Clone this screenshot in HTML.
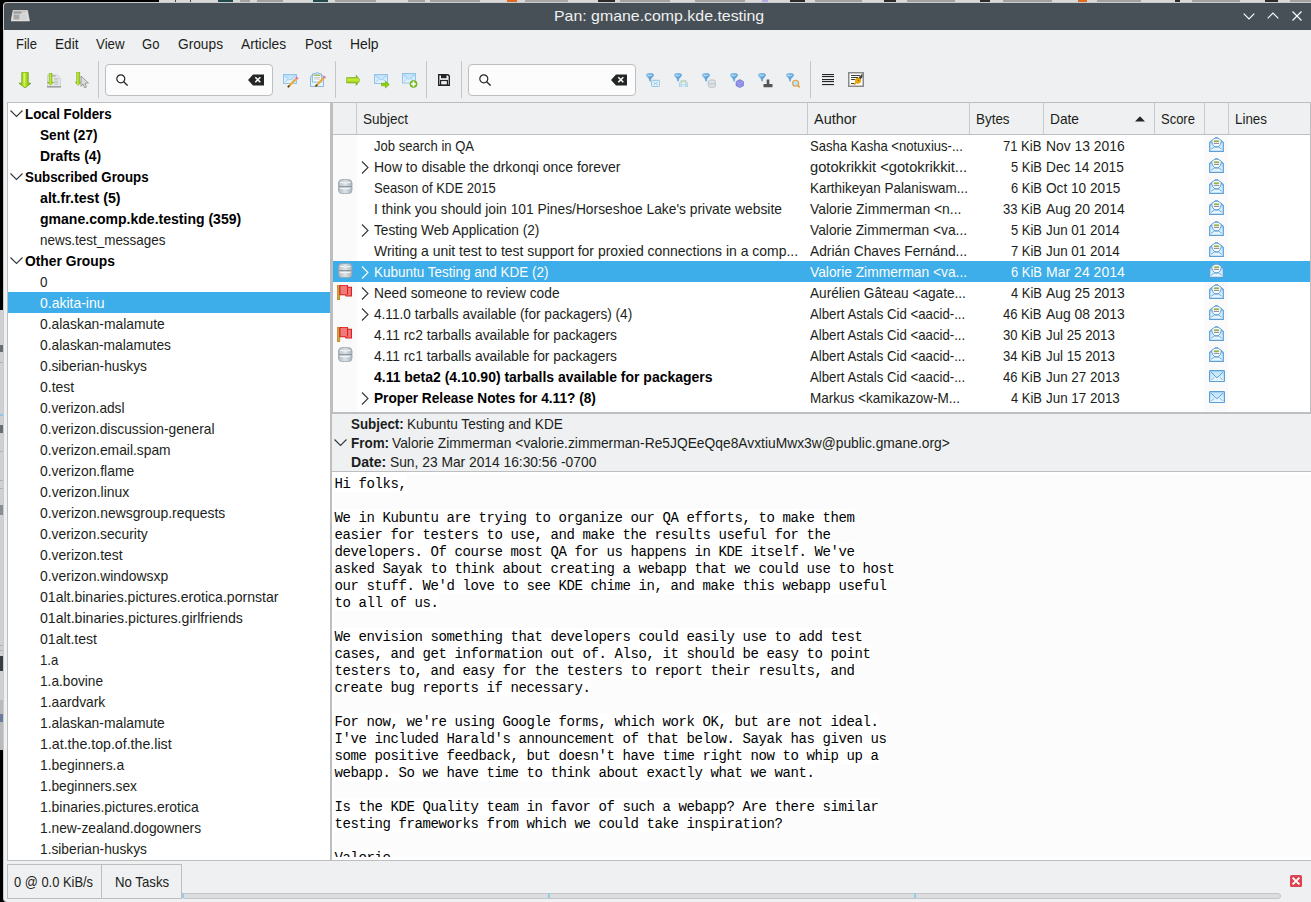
<!DOCTYPE html><html><head><meta charset="utf-8"><style>
*{box-sizing:border-box}
html,body{margin:0;padding:0}
body{width:1311px;height:902px;overflow:hidden;position:relative;background:#000;font-family:"Liberation Sans", sans-serif;font-size:13px;color:#1b1e20}
.a{position:absolute}
.t{position:absolute;white-space:pre;line-height:1;transform-origin:0 0}
.m{position:absolute;white-space:pre;font-family:"Liberation Mono", monospace;font-size:14px;letter-spacing:-0.4px;line-height:17px;color:#000}
</style></head><body>
<div class="a" style="left:159px;top:0;width:1152px;height:2px;background:#d9d9d9"></div>
<div class="a" style="left:175px;top:0;width:1px;height:2px;background:#444"></div>
<div class="a" style="left:190px;top:0;width:1px;height:2px;background:#444"></div>
<div class="a" style="left:218px;top:0;width:15px;height:2px;background:#1f4a48"></div>
<div class="a" style="left:240px;top:0;width:10px;height:2px;background:#a2a2a2"></div>
<div class="a" style="left:257px;top:0;width:26px;height:2px;background:#a2a2a2"></div>
<div class="a" style="left:313px;top:0;width:15px;height:2px;background:#1f4a48"></div>
<div class="a" style="left:335px;top:0;width:41px;height:2px;background:#a2a2a2"></div>
<div class="a" style="left:408px;top:0;width:17px;height:2px;background:#a2a2a2"></div>
<div class="a" style="left:430px;top:0;width:50px;height:2px;background:#a2a2a2"></div>
<div class="a" style="left:507px;top:0;width:10px;height:2px;background:#e06a20"></div>
<div class="a" style="left:525px;top:0;width:43px;height:2px;background:#a8a8a8"></div>
<div class="a" style="left:598px;top:0;width:17px;height:2px;background:#2a2a2a"></div>
<div class="a" style="left:620px;top:0;width:50px;height:2px;background:#a2a2a2"></div>
<div class="a" style="left:695px;top:0;width:50px;height:2px;background:#a2a2a2"></div>
<div class="a" style="left:762px;top:0;width:6px;height:2px;background:#b8a8e0"></div>
<div class="a" style="left:790px;top:0;width:15px;height:2px;background:#2a2a2a"></div>
<div class="a" style="left:815px;top:0;width:47px;height:2px;background:#a2a2a2"></div>
<div class="a" style="left:884px;top:0;width:12px;height:2px;background:#2a2a2a"></div>
<div class="a" style="left:907px;top:0;width:48px;height:2px;background:#a2a2a2"></div>
<div class="a" style="left:980px;top:0;width:10px;height:2px;background:#2a2a2a"></div>
<div class="a" style="left:1003px;top:0;width:49px;height:2px;background:#a2a2a2"></div>
<div class="a" style="left:1078px;top:0;width:9px;height:2px;background:#e06a20"></div>
<div class="a" style="left:1097px;top:0;width:44px;height:2px;background:#a2a2a2"></div>
<div class="a" style="left:1175px;top:0;width:5px;height:2px;background:#2a2a2a"></div>
<div class="a" style="left:1192px;top:0;width:48px;height:2px;background:#a2a2a2"></div>
<div class="a" style="left:1265px;top:0;width:13px;height:2px;background:#2a2a2a"></div>
<div class="a" style="left:1290px;top:0;width:21px;height:2px;background:#a2a2a2"></div>
<div class="a" style="left:3px;top:2px;width:1308px;height:900px;background:#eff0f1;border-top-left-radius:4px;border-bottom-left-radius:4px;border-left:1px solid #c9cbcd;border-top:1px solid #c9cbcd"></div>
<div class="a" style="left:4px;top:3px;width:1307px;height:27px;background:#475057;border-top-left-radius:3px"></div>
<div class="t" style="left:553.50px;top:8.30px;font-size:15px;color:#eff0f1;transform:scaleX(1.0592);">Pan: gmane.comp.kde.testing</div>
<svg class="a" style="left:11px;top:10px;" width="19" height="12" viewBox="0 0 19 12"><path d="M2 0.3 L16.5 0.3 L18.5 11 L0 11Z" fill="#dcdcdc" stroke="#e8e8e8" stroke-width="0.5"/><rect x="2.5" y="4.5" width="6" height="5" fill="#a6a6a6"/><rect x="2.5" y="1.3" width="8" height="2.3" fill="#9a9a9a"/><rect x="11" y="1.5" width="4" height="1" fill="#b8b8b8"/><path d="M9.5 5 L15.5 5 M9.5 7 L15.8 7 M9.5 9 L16 9" stroke="#c4c4c4" stroke-width="0.7"/></svg>
<svg class="a" style="left:1243px;top:13px" width="12" height="7"><path d="M0.7 0.7 L6 6 L11.3 0.7" fill="none" stroke="#fcfcfc" stroke-width="1.2"/></svg>
<svg class="a" style="left:1267px;top:12px" width="12" height="7"><path d="M0.7 6.3 L6 1 L11.3 6.3" fill="none" stroke="#fcfcfc" stroke-width="1.2"/></svg>
<svg class="a" style="left:1292px;top:11px" width="10" height="10"><path d="M0.5 0.5 L9.5 9.5 M9.5 0.5 L0.5 9.5" fill="none" stroke="#fcfcfc" stroke-width="1.2"/></svg>
<div class="a" style="left:0;top:310px;width:3px;height:440px;background:#cfd0d2"></div>
<div class="a" style="left:0;top:656px;width:3px;height:15px;background:#3a3d40"></div>
<div class="a" style="left:0;top:700px;width:3px;height:50px;background:#b9babb"></div>
<div class="a" style="left:0;top:345px;width:3px;height:7px;background:#6a6e72"></div>
<div class="a" style="left:0;top:425px;width:3px;height:8px;background:#6a6e72"></div>
<div class="a" style="left:0;top:505px;width:3px;height:10px;background:#8a8e92"></div>
<div class="a" style="left:0;top:362px;width:3px;height:1px;background:#b0b1b2"></div>
<div class="a" style="left:0;top:451px;width:3px;height:1px;background:#b0b1b2"></div>
<div class="a" style="left:0;top:480px;width:3px;height:1px;background:#b0b1b2"></div>
<div class="a" style="left:0;top:488px;width:3px;height:1px;background:#b0b1b2"></div>
<div class="a" style="left:0;top:414px;width:3px;height:2px;background:#8cc8e8"></div>
<div class="a" style="left:0;top:645px;width:3px;height:1px;background:#b0b1b2"></div>
<div class="a" style="left:0;top:650px;width:3px;height:1px;background:#b0b1b2"></div>
<div class="a" style="left:0;top:714px;width:3px;height:8px;background:#6a7a9a"></div>
<div class="t" style="left:16.00px;top:38.23px;font-size:13.9px;transform:scaleX(0.9350);">File</div>
<div class="t" style="left:55.00px;top:38.23px;font-size:13.9px;transform:scaleX(0.9788);">Edit</div>
<div class="t" style="left:96.00px;top:38.23px;font-size:13.9px;transform:scaleX(0.9591);">View</div>
<div class="t" style="left:142.00px;top:38.23px;font-size:13.9px;transform:scaleX(0.9415);">Go</div>
<div class="t" style="left:178.00px;top:38.23px;font-size:13.9px;transform:scaleX(0.9878);">Groups</div>
<div class="t" style="left:241.00px;top:38.23px;font-size:13.9px;transform:scaleX(0.9921);">Articles</div>
<div class="t" style="left:305.00px;top:38.23px;font-size:13.9px;transform:scaleX(0.9653);">Post</div>
<div class="t" style="left:350.00px;top:38.23px;font-size:13.9px;">Help</div>
<div class="a" style="left:98px;top:61px;width:1px;height:37px;background:#c4c6c8"></div>
<div class="a" style="left:335px;top:61px;width:1px;height:37px;background:#c4c6c8"></div>
<div class="a" style="left:426px;top:61px;width:1px;height:37px;background:#c4c6c8"></div>
<div class="a" style="left:461px;top:61px;width:1px;height:37px;background:#c4c6c8"></div>
<div class="a" style="left:810px;top:61px;width:1px;height:37px;background:#c4c6c8"></div>
<div class="a" style="left:105px;top:64px;width:168px;height:32px;border:1px solid #bcbebf;border-radius:4px;background:#fcfcfc"></div>
<div class="a" style="left:468px;top:64px;width:168px;height:32px;border:1px solid #bcbebf;border-radius:4px;background:#fcfcfc"></div>
<svg class="a" style="left:19px;top:72px;" width="12" height="16" viewBox="0 0 12 16"><defs><linearGradient id="gA" x1="0" x2="1" y1="0" y2="0"><stop offset="0" stop-color="#6aa800"/><stop offset="0.45" stop-color="#c8ee3a"/><stop offset="1" stop-color="#6aa800"/></linearGradient><linearGradient id="gB" x1="0" x2="0" y1="0" y2="1"><stop offset="0" stop-color="#78b800"/><stop offset="0.5" stop-color="#bfe83a"/><stop offset="1" stop-color="#6aa800"/></linearGradient></defs><path d="M2.8 0.8 Q2.8 0 3.6 0 L8.4 0 Q9.2 0 9.2 0.8 L9.2 11.2 L12 11.2 L6 16 L0 11.2 L2.8 11.2Z" fill="url(#gA)" stroke="#5d9a00" stroke-width="0.7"/><path d="M5.2 1 L5.2 11.5" stroke="#e6f870" stroke-width="1.2" opacity="0.8"/></svg>
<svg class="a" style="left:47px;top:73px;" width="14" height="15" viewBox="0 0 14 15"><path d="M0.5 2 L10 2 L13.5 5 L13.5 14 L0.5 14Z" fill="#e8eaea" stroke="#c8cbcc" stroke-width="0.8"/><rect x="0" y="13.2" width="14" height="1.2" fill="#8a8f94"/><rect x="1.8" y="2" width="7" height="1.8" fill="#b9bdc0"/><rect x="7" y="5.5" width="4.5" height="0.8" fill="#9aa0a4"/><path d="M7 8 L11.5 8 M7 9.6 L11.5 9.6 M7 11.2 L11.5 11.2" stroke="#b4b8bb" stroke-width="0.8"/><path d="M2.2 0 L5 0 L5 9.3 L6.6 9.3 L3.6 12.2 L0.4 9.3 L2.2 9.3Z" fill="url(#gA)" stroke="#5d9a00" stroke-width="0.4"/></svg>
<svg class="a" style="left:75px;top:72px;" width="14" height="16" viewBox="0 0 14 16"><path d="M1.6 0 L4.7 0 L4.7 10.2 L5.8 10.2 L3.1 13.5 L0.2 10.2 L1.6 10.2Z" fill="url(#gA)" stroke="#5d9a00" stroke-width="0.4"/><path d="M6 4 L13.5 11 L10 11.2 L11.5 15 L9.5 15.8 L8 12 L6 14.3Z" fill="#dcdcdc" stroke="#8a8a8a" stroke-width="0.8"/></svg>
<svg class="a" style="left:116px;top:74px;" width="12" height="12" viewBox="0 0 12 12"><circle cx="4.8" cy="4.8" r="4" fill="none" stroke="#232627" stroke-width="1.2"/><path d="M7.7 7.7 L11.6 11.6" stroke="#232627" stroke-width="1.3"/></svg>
<svg class="a" style="left:248px;top:74px;" width="16" height="12" viewBox="0 0 16 12"><path d="M0 6 L5 0.5 L16 0.5 L16 11.5 L5 11.5Z" fill="#232627"/><path d="M7.3 3.3 L12.3 8.3 M12.3 3.3 L7.3 8.3" stroke="#fcfcfc" stroke-width="1.6"/></svg>
<svg class="a" style="left:479px;top:74px;" width="12" height="12" viewBox="0 0 12 12"><circle cx="4.8" cy="4.8" r="4" fill="none" stroke="#232627" stroke-width="1.2"/><path d="M7.7 7.7 L11.6 11.6" stroke="#232627" stroke-width="1.3"/></svg>
<svg class="a" style="left:611px;top:74px;" width="16" height="12" viewBox="0 0 16 12"><path d="M0 6 L5 0.5 L16 0.5 L16 11.5 L5 11.5Z" fill="#232627"/><path d="M7.3 3.3 L12.3 8.3 M12.3 3.3 L7.3 8.3" stroke="#fcfcfc" stroke-width="1.6"/></svg>
<svg class="a" style="left:283px;top:74px;" width="16" height="14" viewBox="0 0 16 14"><defs><linearGradient id="eA" x1="0" x2="0" y1="0" y2="1"><stop offset="0" stop-color="#b8e0fa"/><stop offset="1" stop-color="#eaf7ff"/></linearGradient></defs><rect x="0.5" y="0.5" width="13" height="9" fill="url(#eA)" stroke="#8cc0e6" stroke-width="0.9"/><path d="M1.5 1.5 L7.0 6.0 L12.5 1.5 M1.5 8.5 L5.32 5.0 M12.5 8.5 L8.68 5.0" fill="none" stroke="#8cc0e6" stroke-width="0.7"/><path d="M4.8 13.2 L14.5 3.5" stroke="#f0a830" stroke-width="2.0" stroke-linecap="butt"/><path d="M4.8 13.2 L6.545999999999999 11.453999999999999" stroke="#3a3a3a" stroke-width="1.3"/><path d="M13.336 4.664 L14.5 3.5" stroke="#d86ad8" stroke-width="2.6"/></svg>
<svg class="a" style="left:310px;top:72px;" width="16" height="16" viewBox="0 0 16 16"><defs><linearGradient id="eA" x1="0" x2="0" y1="0" y2="1"><stop offset="0" stop-color="#b8e0fa"/><stop offset="1" stop-color="#eaf7ff"/></linearGradient></defs><path d="M0.5 5 L3 2 L11 2 L13.5 5 L13.5 14.5 L0.5 14.5Z" fill="url(#eA)" stroke="#7fb2dc" stroke-width="0.9"/><rect x="2.5" y="2" width="9" height="8" fill="#f4f8fb" stroke="#7fa6c8" stroke-width="0.7"/><rect x="3.5" y="2.8" width="7" height="1" fill="#8fb83a"/><rect x="6" y="0.3" width="2.5" height="1.8" fill="#cfe6f6" stroke="#8ab8dc" stroke-width="0.5"/><path d="M4 5.5 L10 5.5 M4 7 L10 7" stroke="#b0b0b0" stroke-width="0.6"/><path d="M5.5 14.5 L15 4.5" stroke="#f0a830" stroke-width="2.0" stroke-linecap="butt"/><path d="M5.5 14.5 L7.21 12.7" stroke="#3a3a3a" stroke-width="1.3"/><path d="M13.86 5.7 L15 4.5" stroke="#d86ad8" stroke-width="2.6"/></svg>
<svg class="a" style="left:346px;top:75px;" width="14" height="11" viewBox="0 0 14 11"><defs><linearGradient id="gC" x1="0" x2="0" y1="0" y2="1"><stop offset="0" stop-color="#6aa800"/><stop offset="0.45" stop-color="#c8ee3a"/><stop offset="1" stop-color="#6aa800"/></linearGradient><linearGradient id="gB" x1="0" x2="0" y1="0" y2="1"><stop offset="0" stop-color="#78b800"/><stop offset="0.5" stop-color="#bfe83a"/><stop offset="1" stop-color="#6aa800"/></linearGradient></defs><path d="M0.3 3.5 Q0.3 2.6 1.2 2.6 L10.2 2.6 L10.2 0.2 L14 5.3 L10.2 10.4 L10.2 8 L1.2 8 Q0.3 8 0.3 7.1Z" fill="url(#gC)" stroke="#5d9a00" stroke-width="0.5"/></svg>
<svg class="a" style="left:374px;top:74px;" width="16" height="15" viewBox="0 0 16 15"><defs><linearGradient id="eA" x1="0" x2="0" y1="0" y2="1"><stop offset="0" stop-color="#b8e0fa"/><stop offset="1" stop-color="#eaf7ff"/></linearGradient></defs><rect x="0.5" y="0.5" width="13" height="9" fill="url(#eA)" stroke="#8cc0e6" stroke-width="0.9"/><path d="M1.5 1.5 L7.0 6.0 L12.5 1.5 M1.5 8.5 L5.32 5.0 M12.5 8.5 L8.68 5.0" fill="none" stroke="#8cc0e6" stroke-width="0.7"/><path d="M7.5 9.2 L11.5 9.2 L11.5 7 L15.3 10.5 L11.5 14 L11.5 11.8 L7.5 11.8Z" fill="#8fd400" stroke="#5d9a00" stroke-width="0.5"/></svg>
<svg class="a" style="left:402px;top:73px;" width="16" height="15" viewBox="0 0 16 15"><defs><linearGradient id="eA" x1="0" x2="0" y1="0" y2="1"><stop offset="0" stop-color="#b8e0fa"/><stop offset="1" stop-color="#eaf7ff"/></linearGradient></defs><rect x="0.5" y="0.5" width="13" height="9.5" fill="url(#eA)" stroke="#8cc0e6" stroke-width="0.9"/><path d="M1.5 1.5 L7.0 6.3 L12.5 1.5 M1.5 9.0 L5.32 5.25 M12.5 9.0 L8.68 5.25" fill="none" stroke="#8cc0e6" stroke-width="0.7"/><circle cx="11.5" cy="11" r="3.6" fill="#7cc020" stroke="#5a9a10" stroke-width="0.5"/><path d="M11.5 8.6 L11.5 13.4 M9.1 11 L13.9 11" stroke="#fff" stroke-width="1.7"/></svg>
<svg class="a" style="left:438px;top:74px;" width="12" height="12" viewBox="0 0 12 12"><path d="M0.7 0.7 L10 0.7 L11.3 2 L11.3 11.3 L0.7 11.3Z" fill="none" stroke="#232627" stroke-width="1.4"/><rect x="3" y="0.7" width="5.5" height="3.5" fill="#232627"/><rect x="2.6" y="6.5" width="6.8" height="4.8" fill="none" stroke="#232627" stroke-width="1.2"/></svg>
<svg class="a" style="left:646px;top:73px;" width="14" height="14" viewBox="0 0 14 14"><defs><linearGradient id="fA" x1="0" x2="1" y1="0" y2="1"><stop offset="0" stop-color="#9fd4f8"/><stop offset="1" stop-color="#2c82c4"/></linearGradient></defs><path d="M0.3 2 Q0.3 0.3 4 0.3 Q7.7 0.3 7.7 2 Q7.7 3.3 5.2 5.3 Q4.6 6.3 4.4 8.2 L3.8 8.2 Q3.4 6.2 2.8 5.3 Q0.3 3.3 0.3 2Z" fill="url(#fA)" stroke="#4a92cc" stroke-width="0.4"/><path d="M1.5 2.2 Q4 3.2 6.5 2.2" stroke="#d8f0ff" stroke-width="0.6" fill="none"/><rect x="5.5" y="7.3" width="8.2" height="6.3" rx="1" fill="#dff3fd" stroke="#8db8d8" stroke-width="0.9"/><path d="M7.3 9 L11.9 12 M11.9 9 L7.3 12" stroke="#8cc0e6" stroke-width="0.8"/></svg>
<svg class="a" style="left:674px;top:73px;" width="14" height="14" viewBox="0 0 14 14"><defs><linearGradient id="fA" x1="0" x2="1" y1="0" y2="1"><stop offset="0" stop-color="#9fd4f8"/><stop offset="1" stop-color="#2c82c4"/></linearGradient></defs><path d="M0.3 2 Q0.3 0.3 4 0.3 Q7.7 0.3 7.7 2 Q7.7 3.3 5.2 5.3 Q4.6 6.3 4.4 8.2 L3.8 8.2 Q3.4 6.2 2.8 5.3 Q0.3 3.3 0.3 2Z" fill="url(#fA)" stroke="#4a92cc" stroke-width="0.4"/><path d="M1.5 2.2 Q4 3.2 6.5 2.2" stroke="#d8f0ff" stroke-width="0.6" fill="none"/><path d="M5.8 9.8 L7.5 8 L11.5 8 L13.2 9.8 L13.2 14.2 L5.8 14.2Z" fill="#e2f5fd" stroke="#8db8d8" stroke-width="0.8"/><rect x="7.2" y="7.2" width="4.6" height="4.2" fill="#f4fbff" stroke="#8db8d8" stroke-width="0.5"/><rect x="7.8" y="8.2" width="3.4" height="1.2" fill="#c8d860"/><path d="M6.5 13.5 L8.5 11.5 M12.5 13.5 L10.5 11.5" stroke="#8db8d8" stroke-width="0.6"/></svg>
<svg class="a" style="left:702px;top:73px;" width="14" height="15" viewBox="0 0 14 15"><defs><linearGradient id="fA" x1="0" x2="1" y1="0" y2="1"><stop offset="0" stop-color="#9fd4f8"/><stop offset="1" stop-color="#2c82c4"/></linearGradient></defs><path d="M0.3 2 Q0.3 0.3 4 0.3 Q7.7 0.3 7.7 2 Q7.7 3.3 5.2 5.3 Q4.6 6.3 4.4 8.2 L3.8 8.2 Q3.4 6.2 2.8 5.3 Q0.3 3.3 0.3 2Z" fill="url(#fA)" stroke="#4a92cc" stroke-width="0.4"/><path d="M1.5 2.2 Q4 3.2 6.5 2.2" stroke="#d8f0ff" stroke-width="0.6" fill="none"/><rect x="6" y="6.8" width="8" height="7.8" rx="3" fill="#d3d9de" stroke="#b3bac0" stroke-width="0.6"/><path d="M6.3 10.7 Q10 11.8 13.7 10.7" stroke="#b0b8be" stroke-width="0.6" fill="none"/><path d="M7.2 8.6 Q10 9.5 12.8 8.6 M7.2 12.2 Q10 13.1 12.8 12.2" stroke="#eef2f5" stroke-width="0.7" fill="none"/></svg>
<svg class="a" style="left:730px;top:73px;" width="14" height="15" viewBox="0 0 14 15"><defs><linearGradient id="fA" x1="0" x2="1" y1="0" y2="1"><stop offset="0" stop-color="#9fd4f8"/><stop offset="1" stop-color="#2c82c4"/></linearGradient></defs><path d="M0.3 2 Q0.3 0.3 4 0.3 Q7.7 0.3 7.7 2 Q7.7 3.3 5.2 5.3 Q4.6 6.3 4.4 8.2 L3.8 8.2 Q3.4 6.2 2.8 5.3 Q0.3 3.3 0.3 2Z" fill="url(#fA)" stroke="#4a92cc" stroke-width="0.4"/><path d="M1.5 2.2 Q4 3.2 6.5 2.2" stroke="#d8f0ff" stroke-width="0.6" fill="none"/><path d="M9.8 6.5 L13.6 8.6 L13.6 12.6 L9.8 14.7 L6 12.6 L6 8.6Z" fill="#8c8ee6" stroke="#6a6cd0" stroke-width="0.6"/><path d="M6 8.6 L9.8 10.6 L13.6 8.6 M9.8 10.6 L9.8 14.7" stroke="#b4b6f4" stroke-width="0.5" fill="none"/></svg>
<svg class="a" style="left:758px;top:73px;" width="15" height="15" viewBox="0 0 15 15"><defs><linearGradient id="fA" x1="0" x2="1" y1="0" y2="1"><stop offset="0" stop-color="#9fd4f8"/><stop offset="1" stop-color="#2c82c4"/></linearGradient></defs><path d="M0.3 2 Q0.3 0.3 4 0.3 Q7.7 0.3 7.7 2 Q7.7 3.3 5.2 5.3 Q4.6 6.3 4.4 8.2 L3.8 8.2 Q3.4 6.2 2.8 5.3 Q0.3 3.3 0.3 2Z" fill="url(#fA)" stroke="#4a92cc" stroke-width="0.4"/><path d="M1.5 2.2 Q4 3.2 6.5 2.2" stroke="#d8f0ff" stroke-width="0.6" fill="none"/><rect x="8.7" y="6.5" width="2.6" height="5" fill="#555"/><rect x="5.5" y="11" width="9" height="3.3" rx="0.5" fill="#555"/></svg>
<svg class="a" style="left:786px;top:73px;" width="15" height="15" viewBox="0 0 15 15"><defs><linearGradient id="fA" x1="0" x2="1" y1="0" y2="1"><stop offset="0" stop-color="#9fd4f8"/><stop offset="1" stop-color="#2c82c4"/></linearGradient></defs><path d="M0.3 2 Q0.3 0.3 4 0.3 Q7.7 0.3 7.7 2 Q7.7 3.3 5.2 5.3 Q4.6 6.3 4.4 8.2 L3.8 8.2 Q3.4 6.2 2.8 5.3 Q0.3 3.3 0.3 2Z" fill="url(#fA)" stroke="#4a92cc" stroke-width="0.4"/><path d="M1.5 2.2 Q4 3.2 6.5 2.2" stroke="#d8f0ff" stroke-width="0.6" fill="none"/><circle cx="9.6" cy="10.2" r="3" fill="#bfe2f8" stroke="#e0a040" stroke-width="1.1"/><path d="M11.8 12.4 L13.8 14.4" stroke="#e0a040" stroke-width="1.5"/></svg>
<svg class="a" style="left:822px;top:74px;" width="12" height="12" viewBox="0 0 12 12"><rect x="0" y="0" width="12" height="1.1" fill="#232627"/><rect x="0" y="2" width="12" height="1.1" fill="#232627"/><rect x="0" y="5" width="12" height="1.1" fill="#232627"/><rect x="0" y="7" width="12" height="1.1" fill="#232627"/><rect x="0" y="10" width="12" height="1.1" fill="#232627"/></svg>
<svg class="a" style="left:848px;top:72px;" width="16" height="15" viewBox="0 0 16 15"><rect x="0.75" y="0.75" width="14.5" height="13.5" fill="#fff" stroke="#8a8a8a" stroke-width="1.5"/><path d="M3 3.5 L12 3.5 M3 5.5 L10 5.5 M3 7.5 L7 7.5 M3 11.5 L6 11.5" stroke="#2a2a2a" stroke-width="0.9"/><path d="M14.5 1.5 L10.5 5.5 L12.5 7.5 L14.5 5Z" fill="#444"/><circle cx="10" cy="8.7" r="2.6" fill="#f5b400" stroke="#d08a00" stroke-width="0.7"/><path d="M8.2 10.5 L6 12.7" stroke="#e09a00" stroke-width="1.6"/><circle cx="10.3" cy="8.4" r="0.9" fill="#b06000"/></svg>
<div class="a" style="left:7px;top:102px;width:324px;height:759px;border:1px solid #bcbebf;background:#fff"></div>
<svg class="a" style="left:10px;top:110px" width="13" height="8"><path d="M0.5 0.5 L6.5 6.5 L12.5 0.5" fill="none" stroke="#31363b" stroke-width="1.1"/></svg>
<div class="t" style="left:25.00px;top:108.23px;font-size:13.9px;font-weight:700;color:#000;transform:scaleX(0.9603);">Local Folders</div>
<div class="t" style="left:40.00px;top:129.23px;font-size:13.9px;font-weight:700;color:#000;transform:scaleX(0.9801);">Sent (27)</div>
<div class="t" style="left:40.00px;top:150.23px;font-size:13.9px;font-weight:700;color:#000;transform:scaleX(1.0035);">Drafts (4)</div>
<svg class="a" style="left:10px;top:173px" width="13" height="8"><path d="M0.5 0.5 L6.5 6.5 L12.5 0.5" fill="none" stroke="#31363b" stroke-width="1.1"/></svg>
<div class="t" style="left:25.00px;top:171.23px;font-size:13.9px;font-weight:700;color:#000;transform:scaleX(0.9594);">Subscribed Groups</div>
<div class="t" style="left:40.00px;top:192.23px;font-size:13.9px;font-weight:700;color:#000;transform:scaleX(1.0232);">alt.fr.test (5)</div>
<div class="t" style="left:40.00px;top:213.23px;font-size:13.9px;font-weight:700;color:#000;transform:scaleX(1.0102);">gmane.comp.kde.testing (359)</div>
<div class="t" style="left:40.00px;top:234.23px;font-size:13.9px;transform:scaleX(0.9667);">news.test_messages</div>
<svg class="a" style="left:10px;top:257px" width="13" height="8"><path d="M0.5 0.5 L6.5 6.5 L12.5 0.5" fill="none" stroke="#31363b" stroke-width="1.1"/></svg>
<div class="t" style="left:25.00px;top:255.23px;font-size:13.9px;font-weight:700;color:#000;transform:scaleX(0.9947);">Other Groups</div>
<div class="t" style="left:40.00px;top:276.23px;font-size:13.9px;transform:scaleX(0.9691);">0</div>
<div class="a" style="left:8px;top:292px;width:323px;height:21px;background:#3daee9"></div>
<div class="t" style="left:40.00px;top:297.23px;font-size:13.9px;color:#fcfcfc;transform:scaleX(1.0070);">0.akita-inu</div>
<div class="t" style="left:40.00px;top:318.23px;font-size:13.9px;transform:scaleX(0.9969);">0.alaskan-malamute</div>
<div class="t" style="left:40.00px;top:339.23px;font-size:13.9px;transform:scaleX(0.9920);">0.alaskan-malamutes</div>
<div class="t" style="left:40.00px;top:360.23px;font-size:13.9px;transform:scaleX(0.9888);">0.siberian-huskys</div>
<div class="t" style="left:40.00px;top:381.23px;font-size:13.9px;transform:scaleX(1.0036);">0.test</div>
<div class="t" style="left:40.00px;top:402.23px;font-size:13.9px;transform:scaleX(0.9861);">0.verizon.adsl</div>
<div class="t" style="left:40.00px;top:423.23px;font-size:13.9px;transform:scaleX(0.9909);">0.verizon.discussion-general</div>
<div class="t" style="left:40.00px;top:444.23px;font-size:13.9px;transform:scaleX(0.9951);">0.verizon.email.spam</div>
<div class="t" style="left:40.00px;top:465.23px;font-size:13.9px;">0.verizon.flame</div>
<div class="t" style="left:40.00px;top:486.23px;font-size:13.9px;transform:scaleX(1.0060);">0.verizon.linux</div>
<div class="t" style="left:40.00px;top:507.23px;font-size:13.9px;">0.verizon.newsgroup.requests</div>
<div class="t" style="left:40.00px;top:528.23px;font-size:13.9px;transform:scaleX(0.9963);">0.verizon.security</div>
<div class="t" style="left:40.00px;top:549.23px;font-size:13.9px;">0.verizon.test</div>
<div class="t" style="left:40.00px;top:570.23px;font-size:13.9px;">0.verizon.windowsxp</div>
<div class="t" style="left:40.00px;top:591.23px;font-size:13.9px;transform:scaleX(1.0125);">01alt.binaries.pictures.erotica.pornstar</div>
<div class="t" style="left:40.00px;top:612.23px;font-size:13.9px;transform:scaleX(1.0182);">01alt.binaries.pictures.girlfriends</div>
<div class="t" style="left:40.00px;top:633.23px;font-size:13.9px;transform:scaleX(1.0116);">01alt.test</div>
<div class="t" style="left:40.00px;top:654.23px;font-size:13.9px;transform:scaleX(0.9496);">1.a</div>
<div class="t" style="left:40.00px;top:675.23px;font-size:13.9px;transform:scaleX(0.9835);">1.a.bovine</div>
<div class="t" style="left:40.00px;top:696.23px;font-size:13.9px;transform:scaleX(0.9944);">1.aardvark</div>
<div class="t" style="left:40.00px;top:717.23px;font-size:13.9px;transform:scaleX(0.9969);">1.alaskan-malamute</div>
<div class="t" style="left:40.00px;top:738.23px;font-size:13.9px;transform:scaleX(1.0204);">1.at.the.top.of.the.list</div>
<div class="t" style="left:40.00px;top:759.23px;font-size:13.9px;">1.beginners.a</div>
<div class="t" style="left:40.00px;top:780.23px;font-size:13.9px;transform:scaleX(0.9881);">1.beginners.sex</div>
<div class="t" style="left:40.00px;top:801.23px;font-size:13.9px;transform:scaleX(1.0032);">1.binaries.pictures.erotica</div>
<div class="t" style="left:40.00px;top:822.23px;font-size:13.9px;transform:scaleX(0.9931);">1.new-zealand.dogowners</div>
<div class="t" style="left:40.00px;top:843.23px;font-size:13.9px;transform:scaleX(0.9888);">1.siberian-huskys</div>
<div class="a" style="left:330px;top:102px;width:981px;height:311px;border:1px solid #bcbebf;border-left:3px solid #bcbebf;background:#fff"></div>
<div class="a" style="left:333px;top:103px;width:977px;height:32px;background:#eff0f1;border-bottom:1px solid #bcbebf"></div>
<div class="a" style="left:333px;top:135px;width:24px;height:277px;background:#fafafa"></div>
<div class="a" style="left:1204px;top:135px;width:24px;height:277px;background:#fafafa"></div>
<div class="a" style="left:356px;top:103px;width:1px;height:31px;background:#c8cacb"></div>
<div class="a" style="left:807px;top:103px;width:1px;height:31px;background:#c8cacb"></div>
<div class="a" style="left:969px;top:103px;width:1px;height:31px;background:#c8cacb"></div>
<div class="a" style="left:1043px;top:103px;width:1px;height:31px;background:#c8cacb"></div>
<div class="a" style="left:1154px;top:103px;width:1px;height:31px;background:#c8cacb"></div>
<div class="a" style="left:1204px;top:103px;width:1px;height:31px;background:#c8cacb"></div>
<div class="a" style="left:1228px;top:103px;width:1px;height:31px;background:#c8cacb"></div>
<div class="t" style="left:363.00px;top:113.23px;font-size:13.9px;transform:scaleX(0.9732);">Subject</div>
<div class="t" style="left:814.00px;top:113.23px;font-size:13.9px;transform:scaleX(1.0406);">Author</div>
<div class="t" style="left:975.50px;top:113.23px;font-size:13.9px;transform:scaleX(0.9660);">Bytes</div>
<div class="t" style="left:1050.00px;top:113.23px;font-size:13.9px;transform:scaleX(0.9885);">Date</div>
<div class="t" style="left:1161.00px;top:113.23px;font-size:13.9px;transform:scaleX(0.9345);">Score</div>
<div class="t" style="left:1235.00px;top:113.23px;font-size:13.9px;transform:scaleX(0.9629);">Lines</div>
<svg class="a" style="left:1135px;top:115.5px" width="10" height="6"><path d="M0 5.5 L5 0.3 L10 5.5Z" fill="#232627"/></svg>
<svg class="a" style="left:1209px;top:137px;" width="15" height="15" viewBox="0 0 15 15"><defs><linearGradient id="mA" x1="0" x2="0" y1="0" y2="1"><stop offset="0" stop-color="#b6e0fb"/><stop offset="1" stop-color="#effaff"/></linearGradient></defs><path d="M0.7 5.5 L3 3.5 L12 3.5 L14.3 5.5 L14.3 14.3 L0.7 14.3Z" fill="url(#mA)" stroke="#5e9ed6" stroke-width="1.2"/><path d="M2.8 5 L2.8 3.2 Q5 1.8 6.2 1 L8.8 1 Q10 1.8 12.2 3.2 L12.2 5 Q12 7.5 9 10 L6 10 Q3 7.5 2.8 5Z" fill="#f8fcff" stroke="#5e9ed6" stroke-width="1"/><rect x="6" y="0.3" width="3" height="1.3" fill="#6aa6d8"/><rect x="4.8" y="3.6" width="5.4" height="1.1" rx="0.5" fill="#7c9a0c"/><rect x="4.8" y="5.8" width="5.4" height="1.1" rx="0.5" fill="#9a9290"/><path d="M2 12.3 L6 9.6 L9 9.6 L13 12.3" fill="none" stroke="#6aa6d8" stroke-width="0.9"/></svg>
<div class="t" style="left:374.00px;top:140.23px;font-size:13.9px;transform:scaleX(0.9390);">Job search in QA</div>
<div class="t" style="left:810.00px;top:140.23px;font-size:13.9px;transform:scaleX(0.9401);">Sasha Kasha &lt;notuxius-...</div>
<div class="t" style="left:1003.14px;top:140.23px;font-size:13.9px;transform:scaleX(0.9373);">71 KiB</div>
<div class="t" style="left:1046.00px;top:140.23px;font-size:13.9px;">Nov 13 2016</div>
<svg class="a" style="left:1209px;top:158px;" width="15" height="15" viewBox="0 0 15 15"><defs><linearGradient id="mA" x1="0" x2="0" y1="0" y2="1"><stop offset="0" stop-color="#b6e0fb"/><stop offset="1" stop-color="#effaff"/></linearGradient></defs><path d="M0.7 5.5 L3 3.5 L12 3.5 L14.3 5.5 L14.3 14.3 L0.7 14.3Z" fill="url(#mA)" stroke="#5e9ed6" stroke-width="1.2"/><path d="M2.8 5 L2.8 3.2 Q5 1.8 6.2 1 L8.8 1 Q10 1.8 12.2 3.2 L12.2 5 Q12 7.5 9 10 L6 10 Q3 7.5 2.8 5Z" fill="#f8fcff" stroke="#5e9ed6" stroke-width="1"/><rect x="6" y="0.3" width="3" height="1.3" fill="#6aa6d8"/><rect x="4.8" y="3.6" width="5.4" height="1.1" rx="0.5" fill="#7c9a0c"/><rect x="4.8" y="5.8" width="5.4" height="1.1" rx="0.5" fill="#9a9290"/><path d="M2 12.3 L6 9.6 L9 9.6 L13 12.3" fill="none" stroke="#6aa6d8" stroke-width="0.9"/></svg>
<svg class="a" style="left:361px;top:161px" width="8" height="13"><path d="M1 0.5 L7 6.5 L1 12.5" fill="none" stroke="#31363b" stroke-width="1.1"/></svg>
<div class="t" style="left:374.00px;top:161.23px;font-size:13.9px;transform:scaleX(1.0067);">How to disable the drkonqi once forever</div>
<div class="t" style="left:810.00px;top:161.23px;font-size:13.9px;transform:scaleX(1.0572);">gotokrikkit &lt;gotokrikkit...</div>
<div class="t" style="left:1010.63px;top:161.23px;font-size:13.9px;transform:scaleX(0.9300);">5 KiB</div>
<div class="t" style="left:1046.00px;top:161.23px;font-size:13.9px;transform:scaleX(0.9877);">Dec 14 2015</div>
<svg class="a" style="left:338px;top:179px;" width="15" height="15" viewBox="0 0 15 15"><defs><linearGradient id="dA" x1="0" x2="1" y1="0" y2="0"><stop offset="0" stop-color="#b4bcc3"/><stop offset="0.5" stop-color="#dde3e8"/><stop offset="1" stop-color="#aab3ba"/></linearGradient></defs><rect x="0.5" y="0.6" width="13.5" height="14" rx="3.5" fill="url(#dA)" stroke="#98a3ab" stroke-width="0.8"/><path d="M0.8 7.6 L13.7 7.6" stroke="#8a949c" stroke-width="1.1" fill="none"/><path d="M2 3.3 Q7.25 5 12.5 3.3 M2 9.2 Q7.25 10.6 12.5 9.2" stroke="#f8fbfd" stroke-width="1" fill="none"/></svg>
<svg class="a" style="left:1209px;top:179px;" width="15" height="15" viewBox="0 0 15 15"><defs><linearGradient id="mA" x1="0" x2="0" y1="0" y2="1"><stop offset="0" stop-color="#b6e0fb"/><stop offset="1" stop-color="#effaff"/></linearGradient></defs><path d="M0.7 5.5 L3 3.5 L12 3.5 L14.3 5.5 L14.3 14.3 L0.7 14.3Z" fill="url(#mA)" stroke="#5e9ed6" stroke-width="1.2"/><path d="M2.8 5 L2.8 3.2 Q5 1.8 6.2 1 L8.8 1 Q10 1.8 12.2 3.2 L12.2 5 Q12 7.5 9 10 L6 10 Q3 7.5 2.8 5Z" fill="#f8fcff" stroke="#5e9ed6" stroke-width="1"/><rect x="6" y="0.3" width="3" height="1.3" fill="#6aa6d8"/><rect x="4.8" y="3.6" width="5.4" height="1.1" rx="0.5" fill="#7c9a0c"/><rect x="4.8" y="5.8" width="5.4" height="1.1" rx="0.5" fill="#9a9290"/><path d="M2 12.3 L6 9.6 L9 9.6 L13 12.3" fill="none" stroke="#6aa6d8" stroke-width="0.9"/></svg>
<div class="t" style="left:374.00px;top:182.23px;font-size:13.9px;transform:scaleX(0.9380);">Season of KDE 2015</div>
<div class="t" style="left:810.00px;top:182.23px;font-size:13.9px;transform:scaleX(0.9647);">Karthikeyan Palaniswam...</div>
<div class="t" style="left:1010.63px;top:182.23px;font-size:13.9px;transform:scaleX(0.9300);">6 KiB</div>
<div class="t" style="left:1046.00px;top:182.23px;font-size:13.9px;transform:scaleX(0.9818);">Oct 10 2015</div>
<svg class="a" style="left:1209px;top:200px;" width="15" height="15" viewBox="0 0 15 15"><defs><linearGradient id="mA" x1="0" x2="0" y1="0" y2="1"><stop offset="0" stop-color="#b6e0fb"/><stop offset="1" stop-color="#effaff"/></linearGradient></defs><path d="M0.7 5.5 L3 3.5 L12 3.5 L14.3 5.5 L14.3 14.3 L0.7 14.3Z" fill="url(#mA)" stroke="#5e9ed6" stroke-width="1.2"/><path d="M2.8 5 L2.8 3.2 Q5 1.8 6.2 1 L8.8 1 Q10 1.8 12.2 3.2 L12.2 5 Q12 7.5 9 10 L6 10 Q3 7.5 2.8 5Z" fill="#f8fcff" stroke="#5e9ed6" stroke-width="1"/><rect x="6" y="0.3" width="3" height="1.3" fill="#6aa6d8"/><rect x="4.8" y="3.6" width="5.4" height="1.1" rx="0.5" fill="#7c9a0c"/><rect x="4.8" y="5.8" width="5.4" height="1.1" rx="0.5" fill="#9a9290"/><path d="M2 12.3 L6 9.6 L9 9.6 L13 12.3" fill="none" stroke="#6aa6d8" stroke-width="0.9"/></svg>
<div class="t" style="left:374.00px;top:203.23px;font-size:13.9px;transform:scaleX(0.9941);">I think you should join 101 Pines/Horseshoe Lake&#x27;s private website</div>
<div class="t" style="left:810.00px;top:203.23px;font-size:13.9px;">Valorie Zimmerman &lt;n...</div>
<div class="t" style="left:1003.14px;top:203.23px;font-size:13.9px;transform:scaleX(0.9373);">33 KiB</div>
<div class="t" style="left:1046.00px;top:203.23px;font-size:13.9px;">Aug 20 2014</div>
<svg class="a" style="left:1209px;top:221px;" width="15" height="15" viewBox="0 0 15 15"><defs><linearGradient id="mA" x1="0" x2="0" y1="0" y2="1"><stop offset="0" stop-color="#b6e0fb"/><stop offset="1" stop-color="#effaff"/></linearGradient></defs><path d="M0.7 5.5 L3 3.5 L12 3.5 L14.3 5.5 L14.3 14.3 L0.7 14.3Z" fill="url(#mA)" stroke="#5e9ed6" stroke-width="1.2"/><path d="M2.8 5 L2.8 3.2 Q5 1.8 6.2 1 L8.8 1 Q10 1.8 12.2 3.2 L12.2 5 Q12 7.5 9 10 L6 10 Q3 7.5 2.8 5Z" fill="#f8fcff" stroke="#5e9ed6" stroke-width="1"/><rect x="6" y="0.3" width="3" height="1.3" fill="#6aa6d8"/><rect x="4.8" y="3.6" width="5.4" height="1.1" rx="0.5" fill="#7c9a0c"/><rect x="4.8" y="5.8" width="5.4" height="1.1" rx="0.5" fill="#9a9290"/><path d="M2 12.3 L6 9.6 L9 9.6 L13 12.3" fill="none" stroke="#6aa6d8" stroke-width="0.9"/></svg>
<svg class="a" style="left:361px;top:224px" width="8" height="13"><path d="M1 0.5 L7 6.5 L1 12.5" fill="none" stroke="#31363b" stroke-width="1.1"/></svg>
<div class="t" style="left:374.00px;top:224.23px;font-size:13.9px;transform:scaleX(0.9838);">Testing Web Application (2)</div>
<div class="t" style="left:810.00px;top:224.23px;font-size:13.9px;transform:scaleX(0.9920);">Valorie Zimmerman &lt;va...</div>
<div class="t" style="left:1010.63px;top:224.23px;font-size:13.9px;transform:scaleX(0.9300);">5 KiB</div>
<div class="t" style="left:1046.00px;top:224.23px;font-size:13.9px;transform:scaleX(0.9651);">Jun 01 2014</div>
<svg class="a" style="left:1209px;top:242px;" width="15" height="15" viewBox="0 0 15 15"><defs><linearGradient id="mA" x1="0" x2="0" y1="0" y2="1"><stop offset="0" stop-color="#b6e0fb"/><stop offset="1" stop-color="#effaff"/></linearGradient></defs><path d="M0.7 5.5 L3 3.5 L12 3.5 L14.3 5.5 L14.3 14.3 L0.7 14.3Z" fill="url(#mA)" stroke="#5e9ed6" stroke-width="1.2"/><path d="M2.8 5 L2.8 3.2 Q5 1.8 6.2 1 L8.8 1 Q10 1.8 12.2 3.2 L12.2 5 Q12 7.5 9 10 L6 10 Q3 7.5 2.8 5Z" fill="#f8fcff" stroke="#5e9ed6" stroke-width="1"/><rect x="6" y="0.3" width="3" height="1.3" fill="#6aa6d8"/><rect x="4.8" y="3.6" width="5.4" height="1.1" rx="0.5" fill="#7c9a0c"/><rect x="4.8" y="5.8" width="5.4" height="1.1" rx="0.5" fill="#9a9290"/><path d="M2 12.3 L6 9.6 L9 9.6 L13 12.3" fill="none" stroke="#6aa6d8" stroke-width="0.9"/></svg>
<div class="t" style="left:374.00px;top:245.23px;font-size:13.9px;transform:scaleX(1.0046);">Writing a unit test to test support for proxied connections in a comp...</div>
<div class="t" style="left:810.00px;top:245.23px;font-size:13.9px;transform:scaleX(0.9925);">Adrián Chaves Fernánd...</div>
<div class="t" style="left:1010.63px;top:245.23px;font-size:13.9px;transform:scaleX(0.9300);">7 KiB</div>
<div class="t" style="left:1046.00px;top:245.23px;font-size:13.9px;transform:scaleX(0.9651);">Jun 01 2014</div>
<div class="a" style="left:333px;top:261px;width:977px;height:21px;background:#3daee9"></div>
<svg class="a" style="left:338px;top:263px;" width="15" height="15" viewBox="0 0 15 15"><defs><linearGradient id="dA" x1="0" x2="1" y1="0" y2="0"><stop offset="0" stop-color="#b4bcc3"/><stop offset="0.5" stop-color="#dde3e8"/><stop offset="1" stop-color="#aab3ba"/></linearGradient></defs><rect x="0.5" y="0.6" width="13.5" height="14" rx="3.5" fill="url(#dA)" stroke="#98a3ab" stroke-width="0.8"/><path d="M0.8 7.6 L13.7 7.6" stroke="#8a949c" stroke-width="1.1" fill="none"/><path d="M2 3.3 Q7.25 5 12.5 3.3 M2 9.2 Q7.25 10.6 12.5 9.2" stroke="#f8fbfd" stroke-width="1" fill="none"/></svg>
<svg class="a" style="left:1209px;top:263px;" width="15" height="15" viewBox="0 0 15 15"><defs><linearGradient id="mA" x1="0" x2="0" y1="0" y2="1"><stop offset="0" stop-color="#b6e0fb"/><stop offset="1" stop-color="#effaff"/></linearGradient></defs><path d="M0.7 5.5 L3 3.5 L12 3.5 L14.3 5.5 L14.3 14.3 L0.7 14.3Z" fill="url(#mA)" stroke="#5e9ed6" stroke-width="1.2"/><path d="M2.8 5 L2.8 3.2 Q5 1.8 6.2 1 L8.8 1 Q10 1.8 12.2 3.2 L12.2 5 Q12 7.5 9 10 L6 10 Q3 7.5 2.8 5Z" fill="#f8fcff" stroke="#5e9ed6" stroke-width="1"/><rect x="6" y="0.3" width="3" height="1.3" fill="#6aa6d8"/><rect x="4.8" y="3.6" width="5.4" height="1.1" rx="0.5" fill="#7c9a0c"/><rect x="4.8" y="5.8" width="5.4" height="1.1" rx="0.5" fill="#9a9290"/><path d="M2 12.3 L6 9.6 L9 9.6 L13 12.3" fill="none" stroke="#6aa6d8" stroke-width="0.9"/></svg>
<svg class="a" style="left:361px;top:266px" width="8" height="13"><path d="M1 0.5 L7 6.5 L1 12.5" fill="none" stroke="#fcfcfc" stroke-width="1.1"/></svg>
<div class="t" style="left:374.00px;top:266.23px;font-size:13.9px;color:#fcfcfc;transform:scaleX(0.9718);">Kubuntu Testing and KDE (2)</div>
<div class="t" style="left:810.00px;top:266.23px;font-size:13.9px;color:#fcfcfc;transform:scaleX(0.9920);">Valorie Zimmerman &lt;va...</div>
<div class="t" style="left:1010.63px;top:266.23px;font-size:13.9px;color:#fcfcfc;transform:scaleX(0.9300);">6 KiB</div>
<div class="t" style="left:1046.00px;top:266.23px;font-size:13.9px;color:#fcfcfc;transform:scaleX(1.0104);">Mar 24 2014</div>
<svg class="a" style="left:337px;top:285px;" width="15" height="15" viewBox="0 0 15 15"><rect x="0.2" y="0" width="2.6" height="15" fill="#d2a43a" stroke="#a87a1c" stroke-width="0.6"/><path d="M2.8 1.2 Q3 0.3 5 0.3 L9.5 0.3 Q10.6 0.3 10.6 1.5 L10.6 2.3 L14.4 2.3 L14.4 11 L9 11 L8.6 9.8 L3 9.8Z" fill="#ee7a7a" stroke="#dd1818" stroke-width="1.1"/><path d="M10.6 2.3 L10.6 9.5" stroke="#dd1818" stroke-width="1"/></svg>
<svg class="a" style="left:1209px;top:284px;" width="15" height="15" viewBox="0 0 15 15"><defs><linearGradient id="mA" x1="0" x2="0" y1="0" y2="1"><stop offset="0" stop-color="#b6e0fb"/><stop offset="1" stop-color="#effaff"/></linearGradient></defs><path d="M0.7 5.5 L3 3.5 L12 3.5 L14.3 5.5 L14.3 14.3 L0.7 14.3Z" fill="url(#mA)" stroke="#5e9ed6" stroke-width="1.2"/><path d="M2.8 5 L2.8 3.2 Q5 1.8 6.2 1 L8.8 1 Q10 1.8 12.2 3.2 L12.2 5 Q12 7.5 9 10 L6 10 Q3 7.5 2.8 5Z" fill="#f8fcff" stroke="#5e9ed6" stroke-width="1"/><rect x="6" y="0.3" width="3" height="1.3" fill="#6aa6d8"/><rect x="4.8" y="3.6" width="5.4" height="1.1" rx="0.5" fill="#7c9a0c"/><rect x="4.8" y="5.8" width="5.4" height="1.1" rx="0.5" fill="#9a9290"/><path d="M2 12.3 L6 9.6 L9 9.6 L13 12.3" fill="none" stroke="#6aa6d8" stroke-width="0.9"/></svg>
<svg class="a" style="left:361px;top:287px" width="8" height="13"><path d="M1 0.5 L7 6.5 L1 12.5" fill="none" stroke="#31363b" stroke-width="1.1"/></svg>
<div class="t" style="left:374.00px;top:287.23px;font-size:13.9px;transform:scaleX(0.9888);">Need someone to review code</div>
<div class="t" style="left:810.00px;top:287.23px;font-size:13.9px;transform:scaleX(0.9824);">Aurélien Gâteau &lt;agate...</div>
<div class="t" style="left:1010.63px;top:287.23px;font-size:13.9px;transform:scaleX(0.9300);">4 KiB</div>
<div class="t" style="left:1046.00px;top:287.23px;font-size:13.9px;">Aug 25 2013</div>
<svg class="a" style="left:1209px;top:305px;" width="15" height="15" viewBox="0 0 15 15"><defs><linearGradient id="mA" x1="0" x2="0" y1="0" y2="1"><stop offset="0" stop-color="#b6e0fb"/><stop offset="1" stop-color="#effaff"/></linearGradient></defs><path d="M0.7 5.5 L3 3.5 L12 3.5 L14.3 5.5 L14.3 14.3 L0.7 14.3Z" fill="url(#mA)" stroke="#5e9ed6" stroke-width="1.2"/><path d="M2.8 5 L2.8 3.2 Q5 1.8 6.2 1 L8.8 1 Q10 1.8 12.2 3.2 L12.2 5 Q12 7.5 9 10 L6 10 Q3 7.5 2.8 5Z" fill="#f8fcff" stroke="#5e9ed6" stroke-width="1"/><rect x="6" y="0.3" width="3" height="1.3" fill="#6aa6d8"/><rect x="4.8" y="3.6" width="5.4" height="1.1" rx="0.5" fill="#7c9a0c"/><rect x="4.8" y="5.8" width="5.4" height="1.1" rx="0.5" fill="#9a9290"/><path d="M2 12.3 L6 9.6 L9 9.6 L13 12.3" fill="none" stroke="#6aa6d8" stroke-width="0.9"/></svg>
<svg class="a" style="left:361px;top:308px" width="8" height="13"><path d="M1 0.5 L7 6.5 L1 12.5" fill="none" stroke="#31363b" stroke-width="1.1"/></svg>
<div class="t" style="left:374.00px;top:308.23px;font-size:13.9px;transform:scaleX(0.9818);">4.11.0 tarballs available (for packagers) (4)</div>
<div class="t" style="left:810.00px;top:308.23px;font-size:13.9px;transform:scaleX(0.9503);">Albert Astals Cid &lt;aacid-...</div>
<div class="t" style="left:1003.14px;top:308.23px;font-size:13.9px;transform:scaleX(0.9373);">46 KiB</div>
<div class="t" style="left:1046.00px;top:308.23px;font-size:13.9px;">Aug 08 2013</div>
<svg class="a" style="left:337px;top:327px;" width="15" height="15" viewBox="0 0 15 15"><rect x="0.2" y="0" width="2.6" height="15" fill="#d2a43a" stroke="#a87a1c" stroke-width="0.6"/><path d="M2.8 1.2 Q3 0.3 5 0.3 L9.5 0.3 Q10.6 0.3 10.6 1.5 L10.6 2.3 L14.4 2.3 L14.4 11 L9 11 L8.6 9.8 L3 9.8Z" fill="#ee7a7a" stroke="#dd1818" stroke-width="1.1"/><path d="M10.6 2.3 L10.6 9.5" stroke="#dd1818" stroke-width="1"/></svg>
<svg class="a" style="left:1209px;top:326px;" width="15" height="15" viewBox="0 0 15 15"><defs><linearGradient id="mA" x1="0" x2="0" y1="0" y2="1"><stop offset="0" stop-color="#b6e0fb"/><stop offset="1" stop-color="#effaff"/></linearGradient></defs><path d="M0.7 5.5 L3 3.5 L12 3.5 L14.3 5.5 L14.3 14.3 L0.7 14.3Z" fill="url(#mA)" stroke="#5e9ed6" stroke-width="1.2"/><path d="M2.8 5 L2.8 3.2 Q5 1.8 6.2 1 L8.8 1 Q10 1.8 12.2 3.2 L12.2 5 Q12 7.5 9 10 L6 10 Q3 7.5 2.8 5Z" fill="#f8fcff" stroke="#5e9ed6" stroke-width="1"/><rect x="6" y="0.3" width="3" height="1.3" fill="#6aa6d8"/><rect x="4.8" y="3.6" width="5.4" height="1.1" rx="0.5" fill="#7c9a0c"/><rect x="4.8" y="5.8" width="5.4" height="1.1" rx="0.5" fill="#9a9290"/><path d="M2 12.3 L6 9.6 L9 9.6 L13 12.3" fill="none" stroke="#6aa6d8" stroke-width="0.9"/></svg>
<div class="t" style="left:374.00px;top:329.23px;font-size:13.9px;transform:scaleX(0.9937);">4.11 rc2 tarballs available for packagers</div>
<div class="t" style="left:810.00px;top:329.23px;font-size:13.9px;transform:scaleX(0.9503);">Albert Astals Cid &lt;aacid-...</div>
<div class="t" style="left:1003.14px;top:329.23px;font-size:13.9px;transform:scaleX(0.9373);">30 KiB</div>
<div class="t" style="left:1046.00px;top:329.23px;font-size:13.9px;transform:scaleX(0.9579);">Jul 25 2013</div>
<svg class="a" style="left:338px;top:347px;" width="15" height="15" viewBox="0 0 15 15"><defs><linearGradient id="dA" x1="0" x2="1" y1="0" y2="0"><stop offset="0" stop-color="#b4bcc3"/><stop offset="0.5" stop-color="#dde3e8"/><stop offset="1" stop-color="#aab3ba"/></linearGradient></defs><rect x="0.5" y="0.6" width="13.5" height="14" rx="3.5" fill="url(#dA)" stroke="#98a3ab" stroke-width="0.8"/><path d="M0.8 7.6 L13.7 7.6" stroke="#8a949c" stroke-width="1.1" fill="none"/><path d="M2 3.3 Q7.25 5 12.5 3.3 M2 9.2 Q7.25 10.6 12.5 9.2" stroke="#f8fbfd" stroke-width="1" fill="none"/></svg>
<svg class="a" style="left:1209px;top:347px;" width="15" height="15" viewBox="0 0 15 15"><defs><linearGradient id="mA" x1="0" x2="0" y1="0" y2="1"><stop offset="0" stop-color="#b6e0fb"/><stop offset="1" stop-color="#effaff"/></linearGradient></defs><path d="M0.7 5.5 L3 3.5 L12 3.5 L14.3 5.5 L14.3 14.3 L0.7 14.3Z" fill="url(#mA)" stroke="#5e9ed6" stroke-width="1.2"/><path d="M2.8 5 L2.8 3.2 Q5 1.8 6.2 1 L8.8 1 Q10 1.8 12.2 3.2 L12.2 5 Q12 7.5 9 10 L6 10 Q3 7.5 2.8 5Z" fill="#f8fcff" stroke="#5e9ed6" stroke-width="1"/><rect x="6" y="0.3" width="3" height="1.3" fill="#6aa6d8"/><rect x="4.8" y="3.6" width="5.4" height="1.1" rx="0.5" fill="#7c9a0c"/><rect x="4.8" y="5.8" width="5.4" height="1.1" rx="0.5" fill="#9a9290"/><path d="M2 12.3 L6 9.6 L9 9.6 L13 12.3" fill="none" stroke="#6aa6d8" stroke-width="0.9"/></svg>
<div class="t" style="left:374.00px;top:350.23px;font-size:13.9px;transform:scaleX(0.9937);">4.11 rc1 tarballs available for packagers</div>
<div class="t" style="left:810.00px;top:350.23px;font-size:13.9px;transform:scaleX(0.9503);">Albert Astals Cid &lt;aacid-...</div>
<div class="t" style="left:1003.14px;top:350.23px;font-size:13.9px;transform:scaleX(0.9373);">34 KiB</div>
<div class="t" style="left:1046.00px;top:350.23px;font-size:13.9px;transform:scaleX(0.9579);">Jul 15 2013</div>
<svg class="a" style="left:1209px;top:370px;" width="16" height="12" viewBox="0 0 16 12"><defs><linearGradient id="mA" x1="0" x2="0" y1="0" y2="1"><stop offset="0" stop-color="#b6e0fb"/><stop offset="1" stop-color="#effaff"/></linearGradient></defs><rect x="0.6" y="0.6" width="14.8" height="11" rx="0.8" fill="url(#mA)" stroke="#5e9ed6" stroke-width="1.2"/><path d="M2.2 2.2 L7 7 Q8 8 9 7 L13.8 2.2" fill="none" stroke="#5e9ed6" stroke-width="1"/><path d="M2.2 9.8 L5 7.5 M13.8 9.8 L11 7.5" fill="none" stroke="#6aa6d8" stroke-width="0.8"/></svg>
<div class="t" style="left:374.00px;top:371.23px;font-size:13.9px;font-weight:700;color:#000;transform:scaleX(1.0054);">4.11 beta2 (4.10.90) tarballs available for packagers</div>
<div class="t" style="left:810.00px;top:371.23px;font-size:13.9px;transform:scaleX(0.9503);">Albert Astals Cid &lt;aacid-...</div>
<div class="t" style="left:1003.14px;top:371.23px;font-size:13.9px;transform:scaleX(0.9373);">46 KiB</div>
<div class="t" style="left:1046.00px;top:371.23px;font-size:13.9px;transform:scaleX(0.9651);">Jun 27 2013</div>
<svg class="a" style="left:1209px;top:391px;" width="16" height="12" viewBox="0 0 16 12"><defs><linearGradient id="mA" x1="0" x2="0" y1="0" y2="1"><stop offset="0" stop-color="#b6e0fb"/><stop offset="1" stop-color="#effaff"/></linearGradient></defs><rect x="0.6" y="0.6" width="14.8" height="11" rx="0.8" fill="url(#mA)" stroke="#5e9ed6" stroke-width="1.2"/><path d="M2.2 2.2 L7 7 Q8 8 9 7 L13.8 2.2" fill="none" stroke="#5e9ed6" stroke-width="1"/><path d="M2.2 9.8 L5 7.5 M13.8 9.8 L11 7.5" fill="none" stroke="#6aa6d8" stroke-width="0.8"/></svg>
<svg class="a" style="left:361px;top:392px" width="8" height="13"><path d="M1 0.5 L7 6.5 L1 12.5" fill="none" stroke="#31363b" stroke-width="1.1"/></svg>
<div class="t" style="left:374.00px;top:392.23px;font-size:13.9px;font-weight:700;color:#000;transform:scaleX(0.9844);">Proper Release Notes for 4.11? (8)</div>
<div class="t" style="left:810.00px;top:392.23px;font-size:13.9px;transform:scaleX(0.9748);">Markus &lt;kamikazow-M...</div>
<div class="t" style="left:1010.63px;top:392.23px;font-size:13.9px;transform:scaleX(0.9300);">4 KiB</div>
<div class="t" style="left:1046.00px;top:392.23px;font-size:13.9px;transform:scaleX(0.9651);">Jun 17 2013</div>
<div class="a" style="left:330px;top:413px;width:981px;height:59px;background:#eff0f1;border-left:2px solid #bcbebf;border-top:1px solid #bcbebf;border-bottom:1px solid #bcbebf"></div>
<svg class="a" style="left:334px;top:439px" width="13" height="8"><path d="M0.5 0.5 L6.5 6.5 L12.5 0.5" fill="none" stroke="#31363b" stroke-width="1.1"/></svg>
<div class="t" style="left:351.00px;top:418.23px;font-size:13.9px;font-weight:700;transform:scaleX(0.9629);">Subject:</div>
<div class="t" style="left:407.00px;top:418.23px;font-size:13.9px;transform:scaleX(0.9813);">Kubuntu Testing and KDE</div>
<div class="t" style="left:351.00px;top:437.23px;font-size:13.9px;font-weight:700;transform:scaleX(0.9676);">From:</div>
<div class="t" style="left:392.00px;top:437.23px;font-size:13.9px;transform:scaleX(0.9944);">Valorie Zimmerman &lt;valorie.zimmerman-Re5JQEeQqe8AvxtiuMwx3w@public.gmane.org&gt;</div>
<div class="t" style="left:351.00px;top:456.23px;font-size:13.9px;font-weight:700;transform:scaleX(1.0142);">Date:</div>
<div class="t" style="left:390.00px;top:456.23px;font-size:13.9px;transform:scaleX(0.9931);">Sun, 23 Mar 2014 16:30:56 -0700</div>
<div class="a" style="left:330px;top:472px;width:981px;height:389px;background:#fff;border-left:2px solid #bcbebf;border-bottom:1px solid #bcbebf;overflow:hidden">
<div class="a" style="left:2px;top:3px;width:977px;height:382px;background:#fcfcfc;overflow:hidden">
<div class="a" style="left:0;top:0px;width:73px;height:17px;background:#fff"></div>
<div class="a" style="left:0;top:34px;width:521px;height:17px;background:#fff"></div>
<div class="a" style="left:0;top:51px;width:497px;height:17px;background:#fff"></div>
<div class="a" style="left:0;top:68px;width:521px;height:17px;background:#fff"></div>
<div class="a" style="left:0;top:85px;width:561px;height:17px;background:#fff"></div>
<div class="a" style="left:0;top:102px;width:553px;height:17px;background:#fff"></div>
<div class="a" style="left:0;top:119px;width:105px;height:17px;background:#fff"></div>
<div class="a" style="left:0;top:153px;width:529px;height:17px;background:#fff"></div>
<div class="a" style="left:0;top:170px;width:537px;height:17px;background:#fff"></div>
<div class="a" style="left:0;top:187px;width:521px;height:17px;background:#fff"></div>
<div class="a" style="left:0;top:204px;width:257px;height:17px;background:#fff"></div>
<div class="a" style="left:0;top:238px;width:545px;height:17px;background:#fff"></div>
<div class="a" style="left:0;top:255px;width:553px;height:17px;background:#fff"></div>
<div class="a" style="left:0;top:272px;width:545px;height:17px;background:#fff"></div>
<div class="a" style="left:0;top:289px;width:481px;height:17px;background:#fff"></div>
<div class="a" style="left:0;top:323px;width:545px;height:17px;background:#fff"></div>
<div class="a" style="left:0;top:340px;width:449px;height:17px;background:#fff"></div>
<div class="a" style="left:0;top:374px;width:57px;height:17px;background:#fff"></div>
<div class="m" style="left:0.5px;top:1px">Hi folks,

We in Kubuntu are trying to organize our QA efforts, to make them
easier for testers to use, and make the results useful for the
developers. Of course most QA for us happens in KDE itself. We&#x27;ve
asked Sayak to think about creating a webapp that we could use to host
our stuff. We&#x27;d love to see KDE chime in, and make this webapp useful
to all of us.

We envision something that developers could easily use to add test
cases, and get information out of. Also, it should be easy to point
testers to, and easy for the testers to report their results, and
create bug reports if necessary.

For now, we&#x27;re using Google forms, which work OK, but are not ideal.
I&#x27;ve included Harald&#x27;s announcement of that below. Sayak has given us
some positive feedback, but doesn&#x27;t have time right now to whip up a
webapp. So we have time to think about exactly what we want.

Is the KDE Quality team in favor of such a webapp? Are there similar
testing frameworks from which we could take inspiration?

Valorie</div></div></div>
<div class="a" style="left:7px;top:864px;width:95px;height:35px;border:1px solid #bcbebf"></div>
<div class="a" style="left:101px;top:864px;width:81px;height:35px;border:1px solid #bcbebf"></div>
<div class="t" style="left:14.00px;top:876.23px;font-size:13.9px;transform:scaleX(0.9287);">0 @ 0.0 KiB/s</div>
<div class="t" style="left:115.00px;top:876.23px;font-size:13.9px;transform:scaleX(0.9518);">No Tasks</div>
<div class="a" style="left:182px;top:893px;width:1099px;height:6px;background:#dcdddf;border:1px solid #c3c5c7;border-radius:3px"></div>
<div class="a" style="left:182px;top:893px;width:2px;height:5px;background:#93cee9"></div>
<div class="a" style="left:548px;top:893px;width:2px;height:5px;background:#93cee9"></div>
<div class="a" style="left:914px;top:893px;width:2px;height:5px;background:#93cee9"></div>
<svg class="a" style="left:1290px;top:875px;" width="12" height="12" viewBox="0 0 12 12"><rect x="0" y="0" width="12" height="12" rx="1.5" fill="#da4453"/><path d="M2.6 2.6 L9.4 9.4 M9.4 2.6 L2.6 9.4" stroke="#fff" stroke-width="1.9"/></svg>
</body></html>
